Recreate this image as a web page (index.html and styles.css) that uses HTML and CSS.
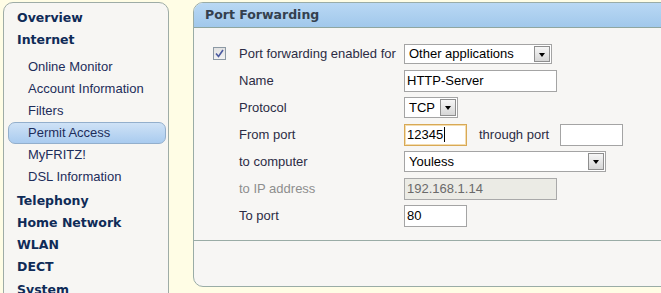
FILE: index.html
```html
<!DOCTYPE html>
<html lang="en">
<head>
    <meta charset="UTF-8">
    <title>Port Forwarding</title>
    <link rel="stylesheet" href="styles.css">
</head>
<body>
    <div class="page">
        <nav class="menu">
            <a class="top">Overview</a>
            <a class="top">Internet</a>
            <ul class="sub">
                <li>Online Monitor</li>
                <li>Account Information</li>
                <li>Filters</li>
                <li class="active">Permit Access</li>
                <li>MyFRITZ!</li>
                <li>DSL Information</li>
            </ul>
            <a class="top">Telephony</a>
            <a class="top">Home Network</a>
            <a class="top">WLAN</a>
            <a class="top">DECT</a>
            <a class="top">System</a>
        </nav>

        <main class="panel">
            <h1 class="panel-head">Port Forwarding</h1>

            <div class="form">
                <span class="check"><svg width="9" height="9" viewBox="0 0 9 9"><path d="M1 4.5 L3.5 7.5 L8 1" fill="none" stroke="#4b5aa0" stroke-width="1.6"/></svg></span>
                <label>Port forwarding enabled for</label>
                <div class="ctl"><div class="select w-app">Other applications<span class="arrow"></span></div></div>

                <span></span>
                <label>Name</label>
                <div class="ctl"><div class="field w-name">HTTP-Server</div></div>

                <span></span>
                <label>Protocol</label>
                <div class="ctl"><div class="select w-proto">TCP<span class="arrow"></span></div></div>

                <span></span>
                <label>From port</label>
                <div class="ctl">
                    <div class="field w-port focus">12345<span class="caret"></span></div>
                    <label class="through">through port</label>
                    <div class="field w-port"></div>
                </div>

                <span></span>
                <label>to computer</label>
                <div class="ctl"><div class="select w-pc">Youless<span class="arrow"></span></div></div>

                <span></span>
                <label class="muted">to IP address</label>
                <div class="ctl"><div class="field w-name disabled">192.168.1.14</div></div>

                <span></span>
                <label>To port</label>
                <div class="ctl"><div class="field w-port">80</div></div>
            </div>

            <div class="panel-foot"></div>
        </main>
    </div>
</body>
</html>
```

FILE: styles.css
```css
* {
    box-sizing: border-box;
}

body {
    margin: 0;
    height: 293px;
    overflow: hidden;
    background-color: #fffde5;
    font-family: "Liberation Sans", Arial, sans-serif;
    font-size: 13px;
    color: #2c2c44;
}

.page {
    display: flex;
    gap: 24px;
    padding: 2px 0 0 3px;
}

/* left menu */
.menu {
    flex: none;
    width: 166px;
    height: 320px;
    padding-top: 4px;
    background: #f7f6f3;
    border: 1px solid #9eaca6;
    border-radius: 10px 10px 0 0;
}

.menu .top {
    display: block;
    padding-left: 13px;
    font-family: "DejaVu Sans", Verdana, sans-serif;
    font-weight: bold;
    font-size: 12.5px;
    line-height: 22.3px;
    color: #0f2b57;
}

.sub {
    list-style: none;
    margin: 4px 2px 2px 4px;
    padding: 0;
}

.sub li {
    height: 22px;
    line-height: 20px;
    padding-left: 19px;
    border: 1px solid transparent;
    border-radius: 7px;
    color: #1d2d5a;
}

.sub li.active {
    background: linear-gradient(#cfe2f6, #a9cbef);
    border-color: #93afcc;
}

/* main panel */
.panel {
    flex: 1;
    display: flex;
    flex-direction: column;
    height: 285px;
    margin-right: -12px;
    background: #f7f6f4;
    border: 1px solid #9aaca6;
    border-radius: 10px;
}

.panel-head {
    margin: 0;
    height: 25px;
    padding-left: 11px;
    line-height: 24px;
    font-family: "DejaVu Sans", Verdana, sans-serif;
    font-size: 12.5px;
    font-weight: bold;
    color: #34404e;
    background: linear-gradient(#b9d8f4, #a1c8eb);
    border-bottom: 1px solid #8fa6a0;
    border-radius: 9px 9px 0 0;
}

.form {
    display: grid;
    grid-template-columns: 26px 165px auto;
    grid-auto-rows: 27px;
    align-items: center;
    padding: 12px 0 0 19px;
}

.form label {
    white-space: nowrap;
}

.form label.muted {
    color: #8e8e8e;
}

.ctl {
    display: flex;
    align-items: center;
}

.check {
    width: 13px;
    height: 13px;
    display: flex;
    align-items: center;
    justify-content: center;
    border: 1px solid #8c99a4;
    background: linear-gradient(#e2e2e2, #f2f2f2);
}

.field,
.select {
    position: relative;
    height: 22px;
    line-height: 20px;
    padding: 0 2px;
    background: #fff;
    border: 1px solid #a4a4a4;
    color: #000;
    white-space: nowrap;
}

.select {
    height: 20px;
    line-height: 18px;
    padding-left: 4px;
}

.arrow {
    position: absolute;
    top: 1px;
    right: 1px;
    bottom: 1px;
    width: 16px;
    border: 1px solid #8e8e8e;
    background: linear-gradient(#f6f6f6, #d6d6d6);
}

.arrow::after {
    content: "";
    position: absolute;
    left: 4px;
    top: 6px;
    border-left: 3.5px solid transparent;
    border-right: 3.5px solid transparent;
    border-top: 4px solid #000;
}

.w-app {
    width: 148px;
}

.w-name {
    width: 153px;
}

.w-proto {
    width: 54px;
    height: 21px;
    line-height: 19px;
}

.w-pc {
    width: 202px;
    height: 21px;
    line-height: 19px;
}

.w-port {
    width: 63px;
}

.field.focus {
    border-color: #d8a955;
    box-shadow: inset 0 0 0 1px #f4ddb0;
}

.caret {
    display: inline-block;
    width: 1px;
    height: 15px;
    margin-left: 1px;
    vertical-align: -3px;
    background: #000;
}

.form label.through {
    margin: 0 11px 0 12px;
}

.field.disabled {
    background: #ebebe5;
    color: #6a6a6a;
    border-color: #a9a9a9;
}

.panel-foot {
    flex: 1;
    margin-top: 11px;
    border-top: 1px solid #9aaca6;
}
```
